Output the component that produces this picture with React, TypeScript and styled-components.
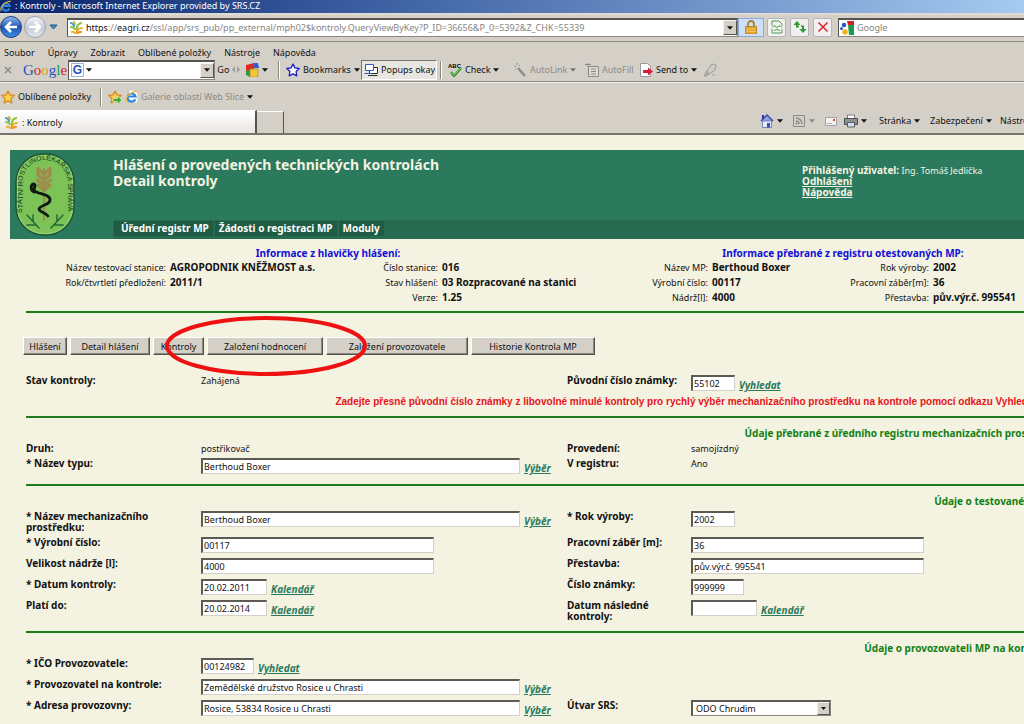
import React, { useState } from "react";
import styled, { createGlobalStyle, css } from "styled-components";

const face = '"Noto Sans", Tahoma, sans-serif';

const GlobalStyle = createGlobalStyle`
  * { box-sizing: border-box; }
  html, body { margin: 0; padding: 0; }
  body {
    background: #f4f2e1;
    color: #111;
    font-family: ${face};
    font-size: 9px;
    line-height: 12px;
    overflow-x: hidden;
  }
  button, input, select { font-family: inherit; font-size: inherit; color: inherit; margin: 0; }
  svg { flex-shrink: 0; }
`;

/* ---------- browser frame ---------- */

const Chrome = styled.header`
  background: #d4d0c8;
  border-bottom: 2px solid #77746c;
  white-space: nowrap;
  overflow: hidden;
`;

const TitleBar = styled.div`
  display: flex;
  align-items: center;
  gap: 3px;
  height: 13px;
  color: #fff;
  background: linear-gradient(90deg, #0a246a 0%, #3f62a4 38%, #6f92c8 68%, #a6caf0 100%);
  overflow: hidden;
  padding-bottom: 2px;
`;

const AddressRow = styled.div`
  display: flex;
  align-items: center;
  height: 29px;
  padding-bottom: 2px;
  border-top: 2px solid #dedbd4;
  border-bottom: 1px solid #8a877f;
`;

const RoundButton = styled.button<{ $muted?: boolean }>`
  width: 22px;
  height: 22px;
  padding: 0;
  margin-right: 2px;
  border-radius: 50%;
  border: 1px solid ${(p) => (p.$muted ? "#9aa3b5" : "#1c3f86")};
  background: ${(p) =>
    p.$muted
      ? "linear-gradient(#f2f4f8, #c4cad6 55%, #e4e8f0)"
      : "linear-gradient(#8fb6ea, #1d57b4 50%, #3f8ce0)"};
  display: grid;
  place-items: center;
`;

const PlainButton = styled.button<{ $muted?: boolean }>`
  display: flex;
  align-items: center;
  gap: 3px;
  padding: 0;
  border: 0;
  background: none;
  white-space: nowrap;
  color: ${(p) => (p.$muted ? "#8d8a83" : "#111")};
`;

const AddressBox = styled.div`
  display: flex;
  align-items: center;
  flex: 1;
  height: 19px;
  margin-left: 9px;
  padding-left: 1px;
  background: #fff;
  border: 1px solid #8a877f;
  border-top: 2px solid #55534e;
  border-left-color: #55534e;
`;

const Url = styled.div`
  flex: 1;
  padding-left: 2px;
  color: #85857f;
  overflow: hidden;
  & b { font-weight: 400; color: #111; }
`;

const DropButton = styled.button`
  width: 14px;
  height: 15px;
  padding: 0;
  background: #d4d0c8;
  border: 1px solid;
  border-color: #f4f2ee #55534e #55534e #f4f2ee;
  display: grid;
  place-items: center;
`;

const LockBox = styled.button`
  width: 26px;
  height: 19px;
  padding: 0;
  margin-right: 3px;
  background: #cfe0fb;
  border: 1px solid #8fa8d6;
  display: grid;
  place-items: center;
`;

const SquareButton = styled.button`
  width: 19px;
  height: 19px;
  margin-right: 4px;
  padding: 0;
  background: #f1f0ee;
  border: 1px solid #b4b4bc;
  border-radius: 2px;
  display: grid;
  place-items: center;
`;

const SearchBox = styled.label`
  display: flex;
  align-items: center;
  gap: 3px;
  width: 186px;
  height: 19px;
  margin-left: 2px;
  padding-left: 1px;
  background: #fff;
  border: 1px solid #8a877f;
  border-top: 2px solid #55534e;
  border-left-color: #55534e;
  border-right: 0;
`;

const BareInput = styled.input`
  flex: 1;
  min-width: 0;
  border: 0;
  padding: 0;
  outline: 0;
  background: transparent;
  &::placeholder { color: #85857f; opacity: 1; }
`;

const MenuRow = styled.nav`
  display: flex;
  gap: 13px;
  height: 17px;
  padding: 3px 4px 0;
`;

const GoogleRow = styled.div`
  display: flex;
  align-items: center;
  height: 23px;
  padding-bottom: 1px;
  border-bottom: 1px solid #8a877f;
`;

const Slot = styled.div<{ $w: number }>`
  display: flex;
  align-items: center;
  gap: 3px;
  flex: 0 0 ${(p) => p.$w}px;
  width: ${(p) => p.$w}px;
`;

const GoogleWord = styled.span`
  font-family: "Liberation Serif", serif;
  font-size: 15px;
  line-height: 16px;
`;

const Letter = styled.span<{ $c: string }>`
  color: ${(p) => p.$c};
`;

const GoogleBox = styled.div`
  display: flex;
  align-items: center;
  gap: 2px;
  width: 147px;
  height: 20px;
  padding-left: 2px;
  background: #fff;
  border: 1px solid #8a877f;
  border-top: 2px solid #55534e;
  border-left-color: #55534e;
`;

const GBadge = styled.span`
  width: 13px;
  height: 14px;
  color: #2450c8;
  border: 1px solid #9fb2e0;
  font: 700 12px/12px "Liberation Sans", sans-serif;
  text-align: center;
`;

const PopupsButton = styled.button`
  display: flex;
  align-items: center;
  gap: 3px;
  width: 76px;
  height: 20px;
  padding: 0 2px;
  margin-right: 3px;
  background: #e8e6e1;
  border: 1px solid;
  border-color: #77746c #fff #fff #77746c;
  white-space: nowrap;
`;

const Divider = styled.span`
  width: 2px;
  height: 18px;
  margin-right: 6px;
  border-left: 1px solid #8a877f;
  border-right: 1px solid #fff;
`;

const FavRow = styled.div`
  display: flex;
  align-items: center;
  height: 28px;
  padding-left: 1px;
  border-top: 1px solid #f2f0ec;
`;

const TabRow = styled.div`
  display: flex;
  height: 23px;
`;

const Tab = styled.button`
  display: flex;
  align-items: center;
  gap: 3px;
  flex: 0 0 257px;
  height: 23px;
  padding: 0 4px;
  background: linear-gradient(#fff, #e8e6e2);
  border: 0;
  border-top: 1px solid #fff;
  border-right: 2px solid #55534e;
`;

const NewTab = styled.button`
  width: 27px;
  height: 22px;
  margin-top: 1px;
  padding: 0;
  background: #d4d0c8;
  border: 0;
  border-top: 1px solid #fff;
  border-right: 1px solid #55534e;
`;

const Commands = styled.div`
  display: flex;
  align-items: center;
  width: 264px;
  margin-left: auto;
  padding-bottom: 2px;
  overflow: hidden;
`;

/* ---------- application page ---------- */

const Page = styled.main`
  padding: 15px 0 12px 10px;
  overflow: hidden;
`;

const Banner = styled.div`
  display: grid;
  grid-template-columns: 103px minmax(0, 689fr) minmax(0, 222fr);
  grid-template-rows: 70px 19px;
  background: #2b7a5d;
  color: #f4f2e1;
`;

const LogoCell = styled.div`
  grid-row: 1 / 3;
  padding: 3px 0 0 5px;
`;

const BannerTitle = styled.h1`
  margin: 0;
  padding-top: 7px;
  font: 700 14px/16px ${face};
`;

const UserBox = styled.div`
  padding-top: 15px;
  line-height: 11px;
  white-space: nowrap;
  & b, & a { font-size: 10px; font-weight: 700; color: inherit; }
  & a { display: table; }
`;

const BannerNav = styled.nav`
  grid-column: 2 / 4;
  display: flex;
  gap: 2px;
  padding: 1px;
  background: #266b50;
`;

const NavLink = styled.a`
  height: 15px;
  padding: 1px 4px 0;
  background: #1f5c44;
  color: #fff;
  font: 700 10px/13px ${face};
  text-decoration: none;
  &:first-child { padding-left: 7px; }
`;

const InfoHeads = styled.div`
  display: grid;
  grid-template-columns: minmax(0, 636fr) minmax(0, 362fr);
  gap: 16px;
  padding-top: 8px;
  text-align: center;
  color: #1010d8;
  font: 700 10px/12px ${face};
`;

const InfoGrid = styled.dl`
  display: grid;
  grid-template-columns:
    minmax(0, 156fr) minmax(0, 150fr) minmax(0, 114fr) minmax(0, 138fr)
    minmax(0, 124fr) minmax(0, 88fr) minmax(0, 125fr) minmax(0, 91fr);
  grid-auto-rows: 15px;
  column-gap: 4px;
  margin: 1px 0 6px;
  line-height: 15px;
  white-space: nowrap;
  & dt { text-align: right; }
  & dd { margin: 0; font-size: 10px; font-weight: 700; }
`;

const Section = styled.section<{ $plain?: boolean }>`
  margin-left: 16px;
  padding: 10px 0 9px;
  border-top: 2px solid #1c7d1c;
  ${(p) =>
    p.$plain &&
    css`
      padding-top: 24px;
    `}
`;

const SectionTitle = styled.h2<{ $start: number }>`
  margin: 0 0 4px;
  padding-left: ${(p) => p.$start}%;
  color: #128012;
  font: 700 10px/11px ${face};
  white-space: nowrap;
`;

const Warning = styled.p`
  margin: 4px 0 0;
  padding-left: 31%;
  color: #e8121a;
  font: 700 10px/11px "Liberation Sans", Arial, sans-serif;
  white-space: nowrap;
`;

const ButtonRow = styled.div`
  position: relative;
  display: flex;
  gap: 3px;
  margin: 0 0 20px -3px;
`;

const ActionButton = styled.button<{ $w: number }>`
  width: ${(p) => p.$w}px;
  height: 18px;
  padding: 0;
  background: #d4d0c8;
  border: 1px solid;
  border-color: #fff #55534e #55534e #fff;
  box-shadow: inset -1px -1px 0 #8a877f;
  white-space: nowrap;
`;

const Ring = styled.svg`
  position: absolute;
  left: 141px;
  top: -22px;
  width: 204px;
  height: 62px;
  pointer-events: none;
`;

const Form = styled.div`
  display: grid;
  grid-template-columns: minmax(0, 175fr) minmax(0, 366fr) minmax(0, 124fr) minmax(0, 333fr);
  row-gap: 4px;
  line-height: 11px;
`;

const Caption = styled.label`
  max-width: 140px;
  font-size: 10px;
  font-weight: 700;
`;

const Value = styled.div`
  display: flex;
  align-items: flex-end;
  align-self: start;
  gap: 4px;
`;

const TextBox = styled.input<{ $w: number }>`
  width: ${(p) => p.$w}px;
  height: 16px;
  margin-bottom: 1px;
  padding: 0 0 0 1px;
  background: #fff;
  border: 1px solid #d4d0c8;
  border-top: 2px solid #5c5a55;
  border-left: 2px solid #5c5a55;
  outline: 0;
`;

const PickLink = styled.a`
  padding-bottom: 1px;
  color: #2b7a5d;
  font: italic 700 10px/11px ${face};
`;

const SelectWrap = styled.span`
  position: relative;
  width: 140px;
  height: 16px;
`;

const SelectBox = styled.select`
  appearance: none;
  display: block;
  width: 100%;
  height: 16px;
  padding: 0 0 0 3px;
  line-height: 12px;
  background: #fff;
  border: 1px solid #8a877f;
  border-top: 2px solid #5c5a55;
  border-left: 2px solid #5c5a55;
  border-radius: 0;
`;

const SelectArrow = styled.span`
  position: absolute;
  right: 1px;
  top: 2px;
  width: 13px;
  height: 13px;
  display: grid;
  place-items: center;
  background: #d4d0c8;
  border: 1px solid;
  border-color: #f4f2ee #55534e #55534e #f4f2ee;
  pointer-events: none;
`;

/* ---------- drawings ---------- */

const Caret = ({ color = "#111", size = 6 }: { color?: string; size?: number }) => (
  <svg width={size} height="4" viewBox="0 0 7 4">
    <path d="M0 0h7L3.500 4z" fill={color} />
  </svg>
);

const LeafIcon = () => (
  <svg width="15" height="15" viewBox="0 0 15 15">
    <g fill="none" strokeWidth="2.200" strokeLinecap="round">
      <path d="M8 13V9" stroke="#e8962a" />
      <path d="M8 8c0-2 1-4 4-5" stroke="#8cc63f" />
      <path d="M9 10c1-2 2-2 4-2" stroke="#f2b330" />
      <path d="M9 13c1-1 2-1 3-1" stroke="#e8962a" />
      <path d="M6 4 5 2" stroke="#f2b330" />
      <path d="M2 3c2 0 2 1 3 3" stroke="#3fa0d8" />
      <path d="M2 7c2 0 3 1 4 2" stroke="#8cc63f" />
      <path d="M3 12c1-1 2 0 3 1" stroke="#f2b330" />
    </g>
  </svg>
);

const IeIcon = ({ size = 12, page = false }: { size?: number; page?: boolean }) => (
  <svg width={size} height={size} viewBox="0 0 12 12">
    {page && <path d="M3 0h6l3 3v9H3z" fill="#fff" stroke="#9a9a9a" strokeWidth=".6" />}
    <path d="M9.500 8.500A3.700 3.700 0 1 1 9.700 6H3.500" fill="none" stroke="#2f86d8" strokeWidth="2" />
    <path d="M1.500 11C-1 8 5 1 11 1.200" fill="none" stroke="#f0bc3a" strokeWidth="1.100" />
  </svg>
);

const Star = ({ fill, stroke, arrow }: { fill: string; stroke: string; arrow?: boolean }) => (
  <svg width="14" height="14" viewBox="0 0 14 14">
    <path
      d="M7 1l1.900 3.900 4.300.600-3.100 3 .700 4.300L7 10.800l-3.800 2 .700-4.300-3.100-3 4.300-.600z"
      fill={fill}
      stroke={stroke}
      strokeWidth="1.300"
      strokeLinejoin="round"
    />
    {arrow && <path d="M5 8.500h4.500V6l4.500 4-4.500 4v-2.500H5z" fill="#3fa83a" stroke="#fff" strokeWidth=".5" />}
  </svg>
);

const Emblem = () => (
  <svg width="60" height="84" viewBox="0 0 60 84">
    <defs>
      <path id="rim" d="M7.500 60V29.500a22.500 22.500 0 0 1 45 0V62" />
    </defs>
    <rect x="1" y="1" width="58" height="81" rx="28" fill="#7dc257" stroke="#1d5a34" strokeWidth="1.500" />
    <rect x="2.500" y="2.500" width="55" height="78" rx="26" fill="none" stroke="#a2d67c" strokeWidth="1" />
    <text fill="#12401f" fontSize="7" fontFamily="Liberation Sans, sans-serif">
      <textPath href="#rim">STÁTNÍ ROSTLINOLÉKAŘSKÁ SPRÁVA</textPath>
    </text>
    <g fill="none" stroke="#a08a4c" strokeLinecap="round">
      <path d="M29 67V16" strokeWidth="1.800" />
      <path
        d="M29 22l-4-5M29 22l4-5M29 27l-6-5M29 27l6-5M29 32l-7-5M29 32l7-5M29 37l-6-5M29 37l6-5M23 22v-7M35 22v-7"
        strokeWidth="3"
      />
    </g>
    <path
      d="M19 39c-3-1-4-6-1-8 3 0 2 3 1 5 0 6 14 3 16 10 1 6-10 6-11 10 0 3 6 3 9 7"
      fill="none"
      stroke="#0e1a12"
      strokeWidth="2.800"
      strokeLinecap="round"
      strokeLinejoin="round"
    />
    <g fill="none" stroke="#1f6a35" strokeWidth="1.500" strokeLinecap="round">
      <path d="M12 62l12 13M18 68v-6M21 72h-9M48 62L36 75M42 68v-6M39 72h9" />
    </g>
  </svg>
);

const SmallIcon = ({ kind }: { kind: string }) => (
  <svg width="14" height="14" viewBox="0 0 14 14">
    {kind === "lock" && (
      <g>
        <path d="M4 7V4a3 3 0 0 1 6 0v3" fill="none" stroke="#a8842c" strokeWidth="1.800" />
        <path d="M1.500 6.500h11V14h-11z" fill="#e6a52c" stroke="#b27c14" strokeWidth=".8" />
        <path d="M2 9h10M2 11.500h10" stroke="#f5cc6c" strokeWidth=".8" />
      </g>
    )}
    {kind === "compat" && (
      <g fill="none" stroke="#4a9a52">
        <path d="M2 5.500V1h7l3 3v1.500M2 9v4h10V9" />
        <path d="M2 7.500l2-2 3 2 3-2 2 2M4 10.500l3-1 3 1" />
      </g>
    )}
    {kind === "refresh" && (
      <g fill="#2f9a35">
        <path d="M4 1L0.500 5H3v2.500h3V6H5V5h2.500z" />
        <path d="M10 13l3.500-4H11V5.500H8V7h1v2H6.500z" />
      </g>
    )}
    {kind === "stop" && <path d="M2.500 2.500l9 9M11.500 2.500l-9 9" stroke="#d8242c" strokeWidth="1.500" />}
    {kind === "g" && (
      <g>
        <path d="M7 0h7v4H8z" fill="#d8202c" />
        <path d="M8 4h6v10H9z" fill="#1f9a4a" />
        <circle cx="4" cy="4" r="2.300" fill="#2858c8" />
        <circle cx="5" cy="11" r="2.800" fill="#f0b420" />
        <circle cx="1.500" cy="7.500" r="1.500" fill="#2858c8" />
      </g>
    )}
    {kind === "blocks" && (
      <g>
        <path d="M1 2l8-2v8H1z" fill="#e02a24" />
        <path d="M9 0h4l1 5H9z" fill="#2c5fd0" />
        <path d="M1 8l4-1v7L1 12z" fill="#2f9a45" />
        <path d="M5 6h8v8H5z" fill="#f4c63a" stroke="#a87c10" strokeWidth=".6" />
      </g>
    )}
    {kind === "popups" && (
      <g fill="#fff" stroke="#2c2c2c" strokeWidth="1">
        <path d="M5.500 4.500h8v6h-8zM4 12.500h9.500" />
        <path d="M1.500 1.500h8v6h-8z" stroke="#2c5fae" />
        <path d="M.500 10.500h7" stroke="#2c5fae" />
      </g>
    )}
    {kind === "check" && (
      <g>
        <text x="0" y="5" fontSize="6" fontWeight="700" fontFamily="Liberation Sans, sans-serif">ABC</text>
        <path d="M3 9l3 4 7-8" fill="none" stroke="#2f8a25" strokeWidth="2.400" />
        <path d="M3 9l3 3.500 7-8" fill="none" stroke="#86d468" strokeWidth="1" />
      </g>
    )}
    {kind === "wand" && (
      <g fill="none" stroke="#8d8a83">
        <path d="M5 5l7 8" strokeWidth="2.400" />
        <path d="M1 3l2 1M4 0v2M7 2L6 3M2 7l1-1" />
      </g>
    )}
    {kind === "fill" && (
      <g fill="#dcdad4" stroke="#8d8a83">
        <path d="M3.500 3.500h10v10h-10z" />
        <path d="M6 6h5M6 8.500h5M6 11h5M0 1.500h6M3 0v4" />
      </g>
    )}
    {kind === "send" && (
      <g>
        <path d="M1.500.500h7l3 3v10h-10z" fill="#fff" stroke="#9a9a9a" />
        <path d="M4 7h5V4.500l5 4-5 4V10H4z" fill="#d8203c" />
      </g>
    )}
    {kind === "marker" && (
      <g stroke="#a09d96" strokeLinejoin="round">
        <path d="M4 8l5-7 4 1-1 5-6 4z" fill="#d0ccc4" />
        <path d="M4 8l2 3-2 2H1z" fill="#b4b0a8" />
        <path d="M9 12h3" />
      </g>
    )}
    {kind === "home" && (
      <g>
        <path d="M1 7l6-6 6 6" fill="#8fa6dc" stroke="#3a4fb0" strokeWidth="1.500" />
        <path d="M2.500 7h9v6.500h-9z" fill="#e8ecf8" stroke="#5a6cae" strokeWidth=".8" />
        <path d="M7 9h3v4.500H7z" fill="#3a4fb0" />
        <path d="M2 1h2v4H2z" fill="#3a30a8" />
      </g>
    )}
    {kind === "rss" && (
      <g fill="none" stroke="#8d8a83">
        <path d="M1.500 1.500h11v11h-11z" />
        <path d="M4 4a6 6 0 0 1 6 6M4 7a3 3 0 0 1 3 3" strokeWidth="1.500" />
        <circle cx="4.500" cy="9.500" r=".7" />
      </g>
    )}
    {kind === "mail" && (
      <g>
        <path d="M1.500 3.500h11v8h-11z" fill="#f4f2f0" stroke="#a0a0a8" />
        <path d="M9 5h2v2H9z" fill="#d8503c" />
        <path d="M3 9.500h5" stroke="#b0b0b8" />
      </g>
    )}
    {kind === "print" && (
      <g>
        <path d="M3.500 1h7v4h-7z" fill="#fff" stroke="#7a7a7a" />
        <path d="M.500 4.500h13v6H.500z" fill="#8c8f94" stroke="#4a4c50" />
        <path d="M3.500 8.500h7V13h-7z" fill="#cfe0f4" stroke="#5a5c60" />
      </g>
    )}
  </svg>
);

/* ---------- fields ---------- */

type FieldProps = { id: string; label: string; value: string; width: number; link?: string };

const Field = ({ id, label, value, width, link }: FieldProps) => {
  const [text, setText] = useState(value);
  return (
    <>
      <Caption htmlFor={id}>{label}</Caption>
      <Value>
        <TextBox id={id} $w={width} value={text} onChange={(e) => setText(e.target.value)} />
        {link && <PickLink href="#">{link}</PickLink>}
      </Value>
    </>
  );
};

const Static = ({ label, value }: { label: string; value: string }) => (
  <>
    <Caption as="span">{label}</Caption>
    <Value>{value}</Value>
  </>
);

const Blank = () => (
  <>
    <span />
    <span />
  </>
);

const menus = ["Soubor", "Úpravy", "Zobrazit", "Oblíbené položky", "Nástroje", "Nápověda"];

const googleLetters: [string, string][] = [
  ["G", "#2450c8"],
  ["o", "#d8202c"],
  ["o", "#e0a010"],
  ["g", "#2450c8"],
  ["l", "#1f9a4a"],
  ["e", "#d8202c"],
];

const info: [string, string][] = [
  ["Název testovací stanice:", "AGROPODNIK KNĚŽMOST a.s."],
  ["Číslo stanice:", "016"],
  ["Název MP:", "Berthoud Boxer"],
  ["Rok výroby:", "2002"],
  ["Rok/čtvrtletí předložení:", "2011/1"],
  ["Stav hlášení:", "03 Rozpracované na stanici"],
  ["Výrobní číslo:", "00117"],
  ["Pracovní záběr[m]:", "36"],
  ["", ""],
  ["Verze:", "1.25"],
  ["Nádrž[l]:", "4000"],
  ["Přestavba:", "pův.výr.č. 995541"],
];

const actions: [string, number][] = [
  ["Hlášení", 44],
  ["Detail hlášení", 80],
  ["Kontroly", 51],
  ["Založení hodnocení", 116],
  ["Založení provozovatele", 142],
  ["Historie Kontrola MP", 124],
];

export default function App() {
  return (
    <>
      <GlobalStyle />
      <Chrome>
        <TitleBar>
          <IeIcon />
          <span>: Kontroly - Microsoft Internet Explorer provided by SRS.CZ</span>
        </TitleBar>
        <AddressRow>
          <RoundButton aria-label="Zpět">
            <svg width="14" height="12" viewBox="0 0 14 12">
              <path d="M7 1L2 6l5 5M2 6h11" fill="none" stroke="#fff" strokeWidth="2.600" />
            </svg>
          </RoundButton>
          <RoundButton $muted aria-label="Vpřed">
            <svg width="14" height="12" viewBox="0 0 14 12">
              <path d="M7 1l5 5-5 5M12 6H1" fill="none" stroke="#fff" strokeWidth="2.600" />
            </svg>
          </RoundButton>
          <PlainButton aria-label="Historie">
            <svg width="10" height="6" viewBox="0 0 10 6">
              <path d="M2 1h7L5.500 5z" fill="#4a90d0" stroke="#1c4f86" />
            </svg>
          </PlainButton>
          <AddressBox>
            <LeafIcon />
            <Url>
              <b>https</b>://<b>eagri.cz</b>
              {"/ssl/app/srs_pub/pp_external/mph02$kontroly.QueryViewByKey?P_ID=36656&P_0=5392&Z_CHK=55339"}
            </Url>
            <DropButton aria-label="Adresy"><Caret /></DropButton>
          </AddressBox>
          <LockBox aria-label="Zabezpečeno"><SmallIcon kind="lock" /></LockBox>
          <SquareButton aria-label="Kompatibilita"><SmallIcon kind="compat" /></SquareButton>
          <SquareButton aria-label="Obnovit"><SmallIcon kind="refresh" /></SquareButton>
          <SquareButton aria-label="Zastavit"><SmallIcon kind="stop" /></SquareButton>
          <SearchBox>
            <SmallIcon kind="g" />
            <BareInput placeholder="Google" aria-label="Hledat" />
          </SearchBox>
        </AddressRow>
        <MenuRow>
          {menus.map((m) => (
            <PlainButton key={m}>{m}</PlainButton>
          ))}
        </MenuRow>
        <GoogleRow>
          <Slot $w={23}>
            <svg width="16" height="8" viewBox="0 0 16 8">
              <path d="M5 1l6 6M11 1L5 7" stroke="#8d8a83" strokeWidth="1.500" />
            </svg>
          </Slot>
          <Slot $w={45}>
            <GoogleWord>
              {googleLetters.map(([ch, c], i) => (
                <Letter key={i} $c={c}>{ch}</Letter>
              ))}
            </GoogleWord>
          </Slot>
          <GoogleBox>
            <GBadge>G</GBadge>
            <Caret />
            <BareInput aria-label="Google" />
            <DropButton aria-label="Historie hledání"><Caret /></DropButton>
          </GoogleBox>
          <Slot $w={30}>
            <PlainButton>&nbsp;Go</PlainButton>
            <svg width="8" height="7" viewBox="0 0 8 7">
              <path d="M3 0v7L0 3.500zM5 0v7l3-3.500z" fill="#a09d96" />
            </svg>
          </Slot>
          <Slot $w={33}><SmallIcon kind="blocks" /><Caret /></Slot>
          <Divider />
          <PlainButton>
            <Slot $w={75}>
              <Star fill="#fff" stroke="#1c1cc8" />
              <span>Bookmarks</span>
              <Caret />
            </Slot>
          </PlainButton>
          <PopupsButton><SmallIcon kind="popups" />Popups okay</PopupsButton>
          <Divider />
          <PlainButton><Slot $w={65}><SmallIcon kind="check" />Check<Caret /></Slot></PlainButton>
          <PlainButton $muted><Slot $w={72}><SmallIcon kind="wand" />AutoLink<Caret color="#77746c" /></Slot></PlainButton>
          <PlainButton $muted><Slot $w={54}><SmallIcon kind="fill" />AutoFill</Slot></PlainButton>
          <PlainButton><Slot $w={64}><SmallIcon kind="send" />Send to<Caret /></Slot></PlainButton>
          <SmallIcon kind="marker" />
        </GoogleRow>
        <FavRow>
          <PlainButton>
            <Slot $w={99}><Star fill="#fcd050" stroke="#d88a1c" />Oblíbené položky</Slot>
          </PlainButton>
          <Divider />
          <Slot $w={17}><Star fill="#fcd050" stroke="#d88a1c" arrow /></Slot>
          <PlainButton $muted><IeIcon page size={13} />Galerie oblastí Web Slice<Caret /></PlainButton>
        </FavRow>
        <TabRow>
          <Tab><LeafIcon />: Kontroly</Tab>
          <NewTab aria-label="Nová karta" />
          <Commands>
            <Slot $w={32}><SmallIcon kind="home" /><Caret /></Slot>
            <Slot $w={32}><SmallIcon kind="rss" /><Caret color="#8d8a83" /></Slot>
            <Slot $w={20}><SmallIcon kind="mail" /></Slot>
            <Slot $w={35}><SmallIcon kind="print" /><Caret /></Slot>
            <PlainButton><Slot $w={51}>Stránka<Caret /></Slot></PlainButton>
            <PlainButton><Slot $w={70}>Zabezpečení<Caret /></Slot></PlainButton>
            <PlainButton>Nástroje</PlainButton>
          </Commands>
        </TabRow>
      </Chrome>

      <Page>
        <Banner>
          <LogoCell><Emblem /></LogoCell>
          <BannerTitle>
            Hlášení o provedených technických kontrolách
            <br />
            Detail kontroly
          </BannerTitle>
          <UserBox>
            <b>Přihlášený uživatel:</b> Ing. Tomáš Jedlička
            <a href="#">Odhlášení</a>
            <a href="#">Nápověda</a>
          </UserBox>
          <BannerNav>
            <NavLink href="#">Úřední registr MP</NavLink>
            <NavLink href="#">Žádosti o registraci MP</NavLink>
            <NavLink href="#">Moduly</NavLink>
          </BannerNav>
        </Banner>

        <InfoHeads>
          <span>Informace z hlavičky hlášení:</span>
          <span>Informace přebrané z registru otestovaných MP:</span>
        </InfoHeads>
        <InfoGrid>
          {info.map(([k, v], i) => (
            <React.Fragment key={i}>
              <dt>{k}</dt>
              <dd>{v}</dd>
            </React.Fragment>
          ))}
        </InfoGrid>

        <Section $plain>
          <ButtonRow>
            {actions.map(([t, w]) => (
              <ActionButton key={t} $w={w}>{t}</ActionButton>
            ))}
            <Ring viewBox="0 0 204 62">
              <ellipse cx="102" cy="31" rx="99" ry="28" fill="none" stroke="#ee1111" strokeWidth="4" />
            </Ring>
          </ButtonRow>
          <Form>
            <Static label="Stav kontroly:" value="Zahájená" />
            <Field id="puvodni" label="Původní číslo známky:" value="55102" width={44} link="Vyhledat" />
          </Form>
          <Warning>
            Zadejte přesně původní číslo známky z libovolné minulé kontroly pro rychlý výběr mechanizačního
            prostředku na kontrole pomocí odkazu Vyhledat
          </Warning>
        </Section>

        <Section>
          <SectionTitle $start={72}>Údaje přebrané z úředního registru mechanizačních prostředků</SectionTitle>
          <Form>
            <Static label="Druh:" value="postřikovač" />
            <Static label="Provedení:" value="samojízdný" />
            <Field id="typ" label="* Název typu:" value="Berthoud Boxer" width={319} link="Výběr" />
            <Static label="V registru:" value="Ano" />
          </Form>
        </Section>

        <Section>
          <SectionTitle $start={91}>Údaje o testovaném mechanizačním prostředku</SectionTitle>
          <Form>
            <Field id="nazev" label="* Název mechanizačního prostředku:" value="Berthoud Boxer" width={319} link="Výběr" />
            <Field id="rok" label="* Rok výroby:" value="2002" width={44} />
            <Field id="vyrobni" label="* Výrobní číslo:" value="00117" width={233} />
            <Field id="zaber" label="Pracovní záběr [m]:" value="36" width={233} />
            <Field id="nadrz" label="Velikost nádrže [l]:" value="4000" width={233} />
            <Field id="prestavba" label="Přestavba:" value="pův.výr.č. 995541" width={233} />
            <Field id="datum" label="* Datum kontroly:" value="20.02.2011" width={66} link="Kalendář" />
            <Field id="znamka" label="Číslo známky:" value="999999" width={53} />
            <Field id="plati" label="Platí do:" value="20.02.2014" width={66} link="Kalendář" />
            <Field id="nasledna" label="Datum následné kontroly:" value="" width={66} link="Kalendář" />
          </Form>
        </Section>

        <Section>
          <SectionTitle $start={84}>Údaje o provozovateli MP na kontrole</SectionTitle>
          <Form>
            <Field id="ico" label="* IČO Provozovatele:" value="00124982" width={53} link="Vyhledat" />
            <Blank />
            <Field id="provozovatel" label="* Provozovatel na kontrole:" value="Zemědělské družstvo Rosice u Chrasti" width={319} link="Výběr" />
            <Blank />
            <Field id="adresa" label="* Adresa provozovny:" value="Rosice, 53834 Rosice u Chrasti" width={319} link="Výběr" />
            <Caption htmlFor="utvar">Útvar SRS:</Caption>
            <Value>
              <SelectWrap>
                <SelectBox id="utvar" defaultValue="ODO Chrudim">
                  <option>ODO Chrudim</option>
                </SelectBox>
                <SelectArrow>
                  <svg width="5" height="3" viewBox="0 0 5 3"><path d="M0 0h5L2.500 3z" fill="#111" /></svg>
                </SelectArrow>
              </SelectWrap>
            </Value>
          </Form>
        </Section>
      </Page>
    </>
  );
}
